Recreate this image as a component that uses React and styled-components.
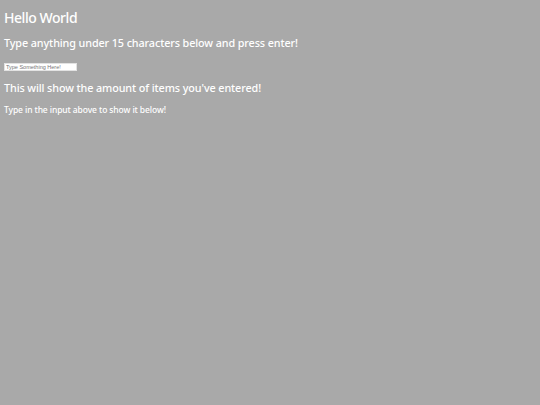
import React from "react";
import styled, { createGlobalStyle } from "styled-components";

const Global = createGlobalStyle`
  html, body { margin: 0; padding: 0; background: #a9a9a9; }
  body { font-family: "Noto Sans", sans-serif; color: #ffffff; }
`;

const Page = styled.div`
  display: flex;
  flex-direction: column;
  align-items: flex-start;
  padding: 4px;
`;

const Title = styled.h1`
  margin: 5.5px 0 0;
  font-size: 14px;
  font-weight: 500;
  line-height: 16px;
  letter-spacing: -0.45px;
`;

const Heading = styled.h2`
  margin: ${(p) => p.$top}px 0 0;
  font-size: 10.8px;
  font-weight: 500;
  line-height: 14px;
  letter-spacing: -0.1px;
`;

const Input = styled.input`
  margin: 12.7px 0 0;
  box-sizing: border-box;
  width: 73px;
  height: 8px;
  padding: 0 1px;
  border: 1px solid #e2e2e2;
  background: #ffffff;
  font-family: "Liberation Sans", Arial, sans-serif;
  font-size: 5.5px;
  outline: none;
  &::placeholder { color: #757575; }
`;

const Text = styled.p`
  margin: 9.4px 0 0;
  font-size: 8.5px;
  font-weight: 500;
  line-height: 11px;
  letter-spacing: -0.1px;
`;

export default function App() {
  return (
    <>
      <Global />
      <Page>
        <Title>Hello World</Title>
        <Heading $top={10.8}>Type anything under 15 characters below and press enter!</Heading>
        <Input placeholder="Type Something Here!" />
        <Heading $top={9.8}>This will show the amount of items you've entered!</Heading>
        <Text>Type in the input above to show it below!</Text>
      </Page>
    </>
  );
}
